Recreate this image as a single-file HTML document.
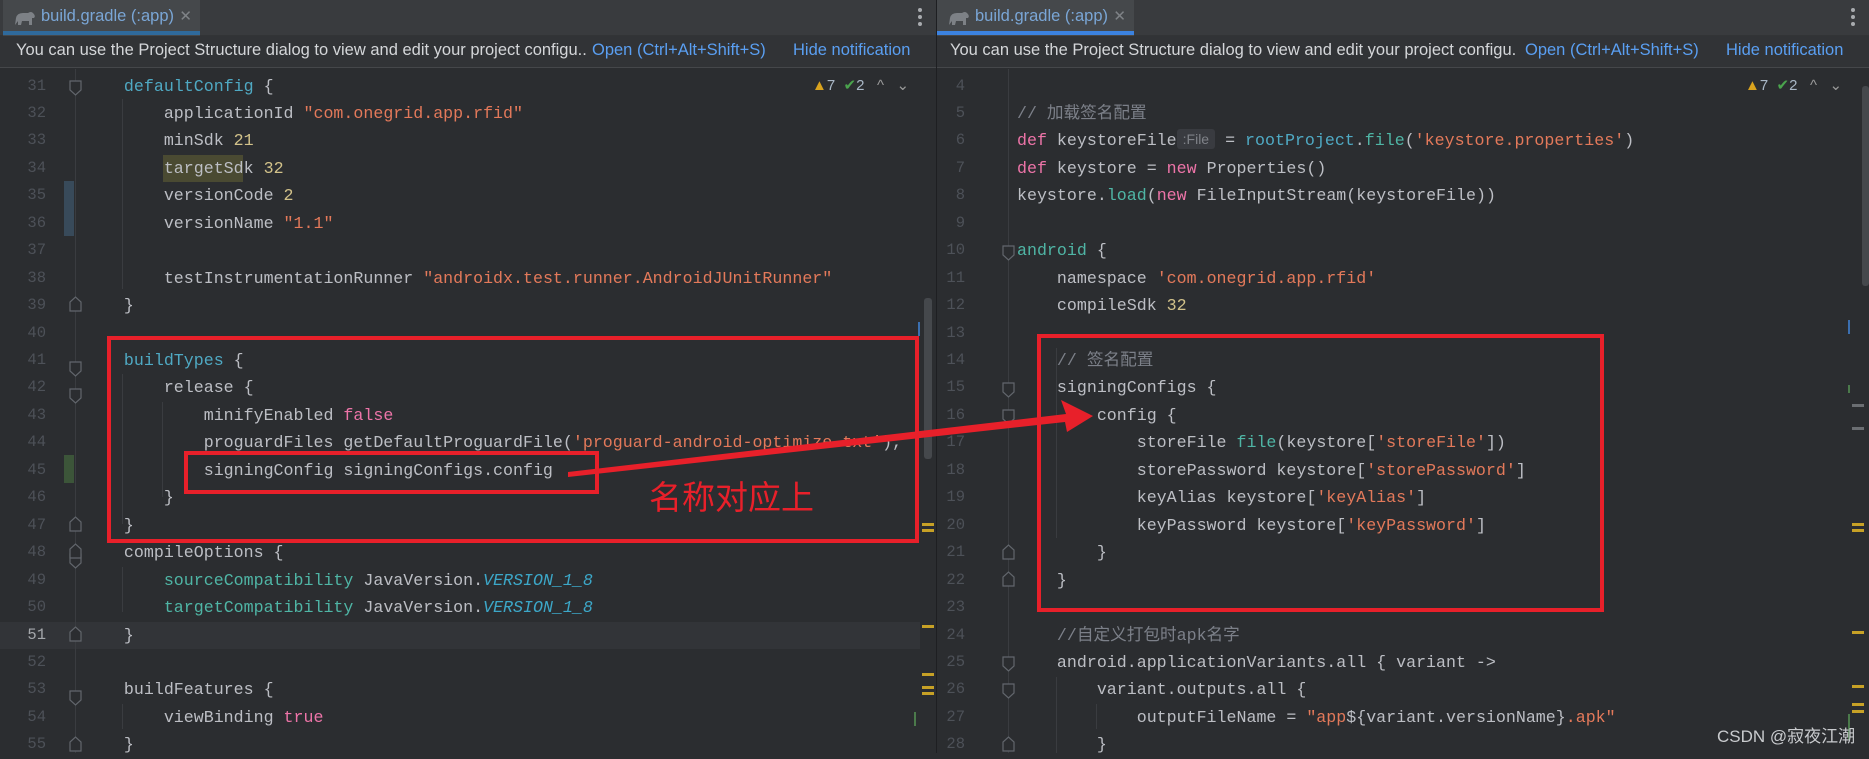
<!DOCTYPE html>
<html><head><meta charset="utf-8">
<style>
*{margin:0;padding:0;box-sizing:border-box}
body{width:1869px;height:753px;background:#2b2d30;position:relative;overflow:hidden;font-family:"Liberation Sans","Noto Sans CJK SC",sans-serif}
.abs{position:absolute}
.tabbar{position:absolute;top:0;height:36px;background:#393b3e;border-bottom:1px solid #323436}
.tab{position:absolute;top:0;height:36px;background:#45484b}
.tab .ul{position:absolute;left:0;right:0;bottom:1px;height:4px}
.tab .t{position:absolute;left:38px;top:7px;font-size:16.5px;color:#7aa6d6;white-space:nowrap}
.tab .x{position:absolute;right:8px;top:7px;font-size:15px;color:#7f8387}
.dots{position:absolute;top:8px;width:4px}
.dots i{display:block;width:4px;height:4px;border-radius:2px;background:#a8abaf;margin-bottom:3px}
.notif{position:absolute;top:36px;height:32px;background:#313336;border-bottom:1px solid #45474a;font-size:16.5px;color:#d4d6d9;white-space:nowrap}
.notif span{position:absolute;top:5px}
.notif .b{color:#5a9ff2}
.code{position:absolute;top:72.5px;font-family:"Liberation Mono","Noto Sans CJK SC",monospace;font-size:16.64px;line-height:27.46px;color:#bcbec4;white-space:pre}
.nums{position:absolute;top:72.5px;font-family:"Liberation Mono",monospace;font-size:15.5px;line-height:27.46px;color:#4d5158;text-align:right;white-space:pre}
.k{color:#ed74a8}.s{color:#e3795a}.n{color:#d2c28a}.m{color:#4fa9c3}.g{color:#4fb5a5}.c{color:#7c8089}.i{color:#3ca7c8;font-style:italic}
.red{position:absolute;border:4px solid #e8202a}
.hint{display:inline-block;background:#393b40;color:#7f8288;font-family:"Liberation Sans",sans-serif;font-size:14px;line-height:20px;padding:0 6px;border-radius:3px;vertical-align:1px}
.warn{position:absolute;top:76px;font-size:15px;color:#a9b7c6;white-space:nowrap}
.mk{position:absolute;height:3px;width:12px;background:#c7a126}
</style></head><body>

<!-- LEFT PANE -->
<div class="tabbar" style="left:0;width:936px"></div>
<div class="tab" style="left:3px;width:197px"><svg class="abs" style="left:10px;top:9px" width="24" height="18" viewBox="0 0 24 18"><path d="M2 16 L3 9 Q4 4 10 4 L15 4 Q18 2 20 4 Q23 7 21 9 L19 9 L19 16 L16 16 L16 12 L9 12 L8 16 L5 16 L5 12 Z" fill="#7d8186"/></svg><div class="t">build.gradle (:app)</div><div class="x">✕</div><div class="ul" style="background:#2f6a9c"></div></div>
<div class="dots" style="left:918px"><i></i><i></i><i></i></div>
<div class="notif" style="left:0;width:936px"><span style="left:16px">You can use the Project Structure dialog to view and edit your project configu..</span><span class="b" style="left:592px">Open (Ctrl+Alt+Shift+S)</span><span class="b" style="left:793px">Hide notification</span></div>

<div class="abs" style="left:0;top:622px;width:936px;height:27px;background:#323438"></div>
<div class="abs" style="left:75px;top:69px;width:1px;height:684px;background:#3a3c40"></div>
<div class="abs" style="left:64px;top:181px;width:10px;height:55px;background:#384a5a"></div>
<div class="abs" style="left:64px;top:455px;width:10px;height:28px;background:#3c5539"></div>
<div class="abs" style="left:122px;top:99px;width:1px;height:190px;background:#3a3c40"></div>
<div class="abs" style="left:122px;top:374px;width:1px;height:150px;background:#3a3c40"></div>
<div class="abs" style="left:162px;top:402px;width:1px;height:95px;background:#3a3c40"></div>
<div class="abs" style="left:122px;top:567px;width:1px;height:45px;background:#3a3c40"></div>
<div class="abs" style="left:122px;top:704px;width:1px;height:25px;background:#3a3c40"></div>

<div class="nums" style="left:0;width:46px">31
32
33
34
35
36
37
38
39
40
41
42
43
44
45
46
47
48
49
50
<span style="color:#a4a7ab">51</span>
52
53
54
55</div>
<div class="abs" style="left:163px;top:155px;width:80px;height:27px;background:#4a4a32"></div>
<div class="code" style="left:84px">    <span class="m">defaultConfig</span> {
        applicationId <span class="s">"com.onegrid.app.rfid"</span>
        minSdk <span class="n">21</span>
        targetSdk <span class="n">32</span>
        versionCode <span class="n">2</span>
        versionName <span class="s">"1.1"</span>

        testInstrumentationRunner <span class="s">"androidx.test.runner.AndroidJUnitRunner"</span>
    }

    <span class="m">buildTypes</span> {
        release {
            minifyEnabled <span class="k">false</span>
            proguardFiles getDefaultProguardFile(<span class="s">'proguard-android-optimize.txt'</span>), <span class="s">'p</span>
            signingConfig signingConfigs.config
        }
    }
    compileOptions {
        <span class="g">sourceCompatibility</span> JavaVersion.<span class="i">VERSION_1_8</span>
        <span class="g">targetCompatibility</span> JavaVersion.<span class="i">VERSION_1_8</span>
    }

    buildFeatures {
        viewBinding <span class="k">true</span>
    }</div>
<div class="abs" style="left:920px;top:69px;width:16px;height:684px;background:#2b2d30"></div>
<div class="abs" style="left:924px;top:298px;width:8px;height:161px;background:#45484c;border-radius:3px"></div>
<div class="abs" style="left:918px;top:322px;width:2px;height:14px;background:#3b6fb0"></div>
<div class="mk" style="left:922px;top:523px"></div><div class="mk" style="left:922px;top:529px"></div>
<div class="mk" style="left:922px;top:625px"></div>
<div class="mk" style="left:922px;top:673px"></div>
<div class="mk" style="left:922px;top:686px"></div><div class="mk" style="left:922px;top:692px"></div>
<div class="abs" style="left:914px;top:712px;width:2px;height:14px;background:#4b7a4b"></div>

<div class="warn" style="left:812px"><span style="color:#d9a31e">▲</span>7 &nbsp;<span style="color:#4aa44d">✔</span>2 &nbsp;&nbsp;<span style="color:#999">^</span> &nbsp;&nbsp;<span style="color:#999">⌄</span></div>

<!-- divider -->
<div class="abs" style="left:936px;top:0;width:1px;height:753px;background:#1e1f22"></div>

<!-- RIGHT PANE -->
<div class="tabbar" style="left:937px;width:932px"></div>
<div class="tab" style="left:937px;width:197px"><svg class="abs" style="left:10px;top:9px" width="24" height="18" viewBox="0 0 24 18"><path d="M2 16 L3 9 Q4 4 10 4 L15 4 Q18 2 20 4 Q23 7 21 9 L19 9 L19 16 L16 16 L16 12 L9 12 L8 16 L5 16 L5 12 Z" fill="#7d8186"/></svg><div class="t">build.gradle (:app)</div><div class="x">✕</div><div class="ul" style="background:#3b82e0"></div></div>
<div class="dots" style="left:1851px"><i></i><i></i><i></i></div>
<div class="notif" style="left:937px;width:932px"><span style="left:13px">You can use the Project Structure dialog to view and edit your project configu.</span><span class="b" style="left:588px">Open (Ctrl+Alt+Shift+S)</span><span class="b" style="left:789px">Hide notification</span></div>

<div class="abs" style="left:1008px;top:69px;width:1px;height:684px;background:#3a3c40"></div>
<div class="abs" style="left:1056px;top:348px;width:1px;height:190px;background:#3a3c40"></div>
<div class="abs" style="left:1056px;top:677px;width:1px;height:76px;background:#3a3c40"></div>
<div class="abs" style="left:1096px;top:704px;width:1px;height:25px;background:#3a3c40"></div>
<div class="nums" style="left:937px;width:28px">4
5
6
7
8
9
10
11
12
13
14
15
16
17
18
19
20
21
22
23
24
25
26
27
28</div>
<div class="code" style="left:1017px">
<span class="c">// 加载签名配置</span>
<span class="k">def</span> keystoreFile<span class="hint">:File</span> = <span class="m">rootProject</span>.<span class="g">file</span>(<span class="s">'keystore.properties'</span>)
<span class="k">def</span> keystore = <span class="k">new</span> Properties()
keystore.<span class="g">load</span>(<span class="k">new</span> FileInputStream(keystoreFile))

<span class="g">android</span> {
    namespace <span class="s">'com.onegrid.app.rfid'</span>
    compileSdk <span class="n">32</span>

    <span class="c">// 签名配置</span>
    signingConfigs {
        config {
            storeFile <span class="g">file</span>(keystore[<span class="s">'storeFile'</span>])
            storePassword keystore[<span class="s">'storePassword'</span>]
            keyAlias keystore[<span class="s">'keyAlias'</span>]
            keyPassword keystore[<span class="s">'keyPassword'</span>]
        }
    }

    <span class="c">//自定义打包时apk名字</span>
    android.applicationVariants.all { variant ->
        variant.outputs.all {
            outputFileName = <span class="s">"app</span>${variant.versionName}<span class="s">.apk"</span>
        }</div>
<div class="abs" style="left:1862px;top:86px;width:7px;height:200px;background:#45484c;border-radius:3px"></div>
<div class="abs" style="left:1848px;top:320px;width:2px;height:14px;background:#3b6fb0"></div>
<div class="abs" style="left:1848px;top:385px;width:2px;height:8px;background:#4b7a4b"></div>
<div class="mk" style="left:1852px;top:404px;background:#6b6e72"></div>
<div class="mk" style="left:1852px;top:427px;background:#6b6e72"></div>
<div class="mk" style="left:1852px;top:523px"></div><div class="mk" style="left:1852px;top:529px"></div>
<div class="mk" style="left:1852px;top:631px"></div>
<div class="mk" style="left:1852px;top:685px"></div>
<div class="mk" style="left:1852px;top:703px"></div><div class="mk" style="left:1852px;top:710px"></div>
<div class="abs" style="left:1848px;top:714px;width:2px;height:26px;background:#4b7a4b"></div>

<div class="warn" style="left:1745px"><span style="color:#d9a31e">▲</span>7 &nbsp;<span style="color:#4aa44d">✔</span>2 &nbsp;&nbsp;<span style="color:#999">^</span> &nbsp;&nbsp;<span style="color:#999">⌄</span></div>

<!-- fold markers -->
<svg class="abs" style="left:0;top:0" width="1869" height="753">
<g fill="#2b2d30" stroke="#62666c" stroke-width="1.2">
<path d="M70 81 h11 v9 l-5.5 5 l-5.5 -5 z"/>
<path d="M70 362 h11 v9 l-5.5 5 l-5.5 -5 z"/>
<path d="M70 389 h11 v9 l-5.5 5 l-5.5 -5 z"/>
<path d="M70 554 h11 v9 l-5.5 5 l-5.5 -5 z"/>
<path d="M70 691 h11 v9 l-5.5 5 l-5.5 -5 z"/>
<path d="M70 311 v-9 l5.5 -5 l5.5 5 v9 z"/>
<path d="M70 531 v-9 l5.5 -5 l5.5 5 v9 z"/>
<path d="M70 558 v-9 l5.5 -5 l5.5 5 v9 z" />
<path d="M70 641 v-9 l5.5 -5 l5.5 5 v9 z"/>
<path d="M70 751 v-9 l5.5 -5 l5.5 5 v9 z"/>
<path d="M1003 246 h11 v9 l-5.5 5 l-5.5 -5 z"/>
<path d="M1003 383 h11 v9 l-5.5 5 l-5.5 -5 z"/>
<path d="M1003 410 h11 v9 l-5.5 5 l-5.5 -5 z"/>
<path d="M1003 657 h11 v9 l-5.5 5 l-5.5 -5 z"/>
<path d="M1003 684 h11 v9 l-5.5 5 l-5.5 -5 z"/>
<path d="M1003 559 v-9 l5.5 -5 l5.5 5 v9 z"/>
<path d="M1003 586 v-9 l5.5 -5 l5.5 5 v9 z"/>
<path d="M1003 751 v-9 l5.5 -5 l5.5 5 v9 z"/>
</g>
<polygon points="568,472 1066,414 1061,400 1093,416 1067,432 1065,422 568,477" fill="#e8202a"/>
</svg>

<div class="red" style="left:107px;top:336px;width:812px;height:207px"></div>
<div class="red" style="left:184px;top:451px;width:415px;height:43px"></div>
<div class="red" style="left:1037px;top:334px;width:567px;height:278px"></div>
<div class="abs" style="left:649px;top:475px;font-size:33px;color:#e8202a;font-family:'Noto Sans CJK SC',sans-serif;line-height:40px">名称对应上</div>

<div class="abs" style="left:1717px;top:722px;font-size:17px;color:#c9cbce;font-family:'Liberation Sans','Noto Sans CJK SC',sans-serif">CSDN @寂夜江潮</div>
</body></html>
